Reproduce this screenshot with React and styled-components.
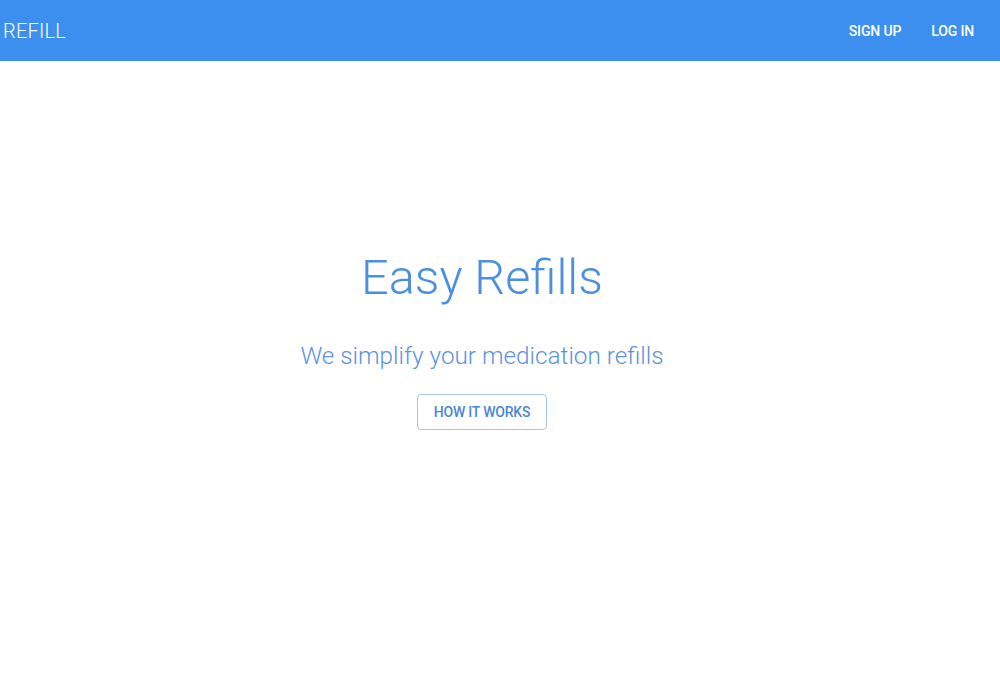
import React from 'react';
import styled, { createGlobalStyle } from 'styled-components';

const GlobalStyle = createGlobalStyle`
  html, body {
    margin: 0;
    padding: 0;
    background: #ffffff;
    font-family: Roboto, "Liberation Sans", sans-serif;
  }
`;

const Page = styled.div`
  width: 1000px;
  height: 700px;
  display: flex;
  flex-direction: column;
  overflow: hidden;
`;

const AppBar = styled.header`
  height: 61px;
  flex-shrink: 0;
  background: #3c8fef;
  display: flex;
  align-items: center;
  justify-content: space-between;
  padding: 0 11px 0 3px;
`;

const Brand = styled.div`
  color: #ffffff;
  font-size: 20px;
  font-weight: 300;
  letter-spacing: 0.2px;
`;

const Nav = styled.nav`
  display: flex;
  align-items: center;
`;

const NavButton = styled.button`
  background: transparent;
  border: none;
  color: #ffffff;
  font-family: Roboto, "Liberation Sans", sans-serif;
  font-size: 14px;
  font-weight: 500;
  letter-spacing: -0.15px;
  text-transform: uppercase;
  padding: 6px 15px;
  cursor: pointer;
`;

const Hero = styled.main`
  flex: 1;
  display: flex;
  flex-direction: column;
  align-items: center;
  padding: 188px 36px 0 0;
`;

const Title = styled.h1`
  margin: 0;
  font-size: 48.6px;
  font-weight: 300;
  color: #4a8fe3;
  line-height: 1.2;
`;

const Subtitle = styled.h2`
  margin: 33px 0 0;
  font-size: 24.3px;
  font-weight: 300;
  color: #5d92dc;
  line-height: 1.3;
`;

const OutlineButton = styled.button`
  margin-top: 22px;
  height: 36px;
  padding: 0 16px;
  background: #ffffff;
  border: 1px solid #a9c7ee;
  border-radius: 4px;
  color: #4b86d6;
  font-family: Roboto, "Liberation Sans", sans-serif;
  font-size: 14px;
  font-weight: 500;
  letter-spacing: -0.2px;
  text-transform: uppercase;
  cursor: pointer;
`;

export default function App() {
  return (
    <>
      <GlobalStyle />
      <Page>
        <AppBar>
          <Brand>REFILL</Brand>
          <Nav>
            <NavButton>Sign up</NavButton>
            <NavButton>Log in</NavButton>
          </Nav>
        </AppBar>
        <Hero>
          <Title>Easy Refills</Title>
          <Subtitle>We simplify your medication refills</Subtitle>
          <OutlineButton>How it works</OutlineButton>
        </Hero>
      </Page>
    </>
  );
}
